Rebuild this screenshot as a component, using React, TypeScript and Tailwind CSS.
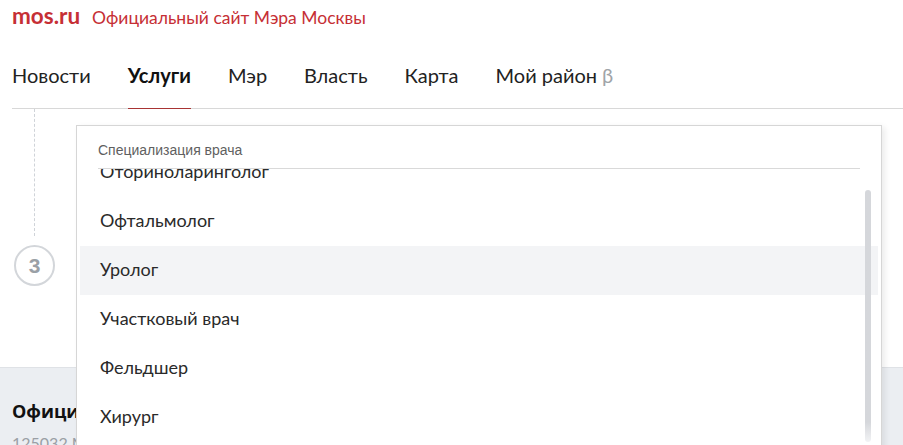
import React from "react";

const items = [
  "Оториноларинголог",
  "Офтальмолог",
  "Уролог",
  "Участковый врач",
  "Фельдшер",
  "Хирург",
  "Эндокринолог",
];

export default function App() {
  return (
    <div className="relative w-[903px] h-[445px] overflow-hidden bg-white font-['Lato','Noto_Sans',sans-serif] text-[#222]">
      {/* header */}
      <div className="h-[46px] px-3 flex items-baseline pt-[3px]">
        <span className="text-[22.5px] font-bold text-[#c62f35] leading-[26px]">mos.ru</span>
        <span className="ml-[12px] text-[17.5px] text-[#c62f35] leading-[26px]">Официальный сайт Мэра Москвы</span>
      </div>
      {/* nav */}
      <div className="ml-3 h-[63px] border-b border-[#d8d8d8] flex items-stretch gap-[37px] text-[20px]">
        <div className="flex items-center pb-[4px]">Новости</div>
        <div className="relative flex items-center pb-[4px] font-bold text-[#111]">
          Услуги
          <div className="absolute left-0 right-0 bottom-[-1px] h-[1px] bg-[#a83434]" />
        </div>
        <div className="flex items-center pb-[4px]">Мэр</div>
        <div className="flex items-center pb-[4px]">Власть</div>
        <div className="flex items-center pb-[4px]">Карта</div>
        <div className="flex items-center pb-[4px]">
          Мой район <span className="ml-[5px] text-[#a0a4a8]">β</span>
        </div>
      </div>
      {/* content */}
      <div className="h-[258px] flex flex-col pl-[14px]">
        <div className="ml-[20px] h-[127px] border-l border-dashed border-[#cfd3d8]" />
        <div className="mt-[9px] w-[41px] h-[41px] rounded-full border-2 border-[#d3d6da] flex items-center justify-center text-[21px] font-bold text-[#9aa0a6] font-['Liberation_Sans',sans-serif]">
          3
        </div>
      </div>
      {/* footer */}
      <div className="h-[200px] bg-[#ebeef2] border-t border-[#dfe2e6] px-3 pt-[31px]">
        <div className="text-[18px] font-bold text-[#111] leading-[24px] font-['Open_Sans',sans-serif]">Официальный портал Мэра и Правительства Москвы</div>
        <div className="mt-[10px] text-[16px] text-[#9a9fa5] leading-[20px]">125032 Москва, ул. Тверская, 13</div>
      </div>
      {/* dropdown */}
      <div className="absolute left-[76px] top-[125px] w-[806px] h-[340px] bg-white border border-[#d6d6d6] shadow-[3px_2px_6px_rgba(0,0,0,0.08)]">
        <div className="mx-[21px] h-[43px] border-b border-[#d9d9d9] pt-[13px] text-[14px] leading-[22px] text-[#5f5f5f] font-['Liberation_Sans',sans-serif]">
          Специализация врача
        </div>
        <div className="h-[300px] overflow-hidden pl-[3px] pr-[3px]">
          <div className="mt-[-21px]">
            {items.map((t) => (
              <div
                key={t}
                className={
                  "h-[49px] flex items-center pl-[20px] pb-[3px] text-[18px] text-[#2a2a2a] " +
                  (t === "Уролог" ? "bg-[#f3f4f6]" : "")
                }
              >
                {t}
              </div>
            ))}
          </div>
        </div>
        <div className="absolute left-[788px] top-[64px] w-[6px] h-[252px] rounded-full bg-gradient-to-b from-[#d5d7db] via-[#d5d7db] via-[92%] to-[#f2f3f5]" />
      </div>
    </div>
  );
}
